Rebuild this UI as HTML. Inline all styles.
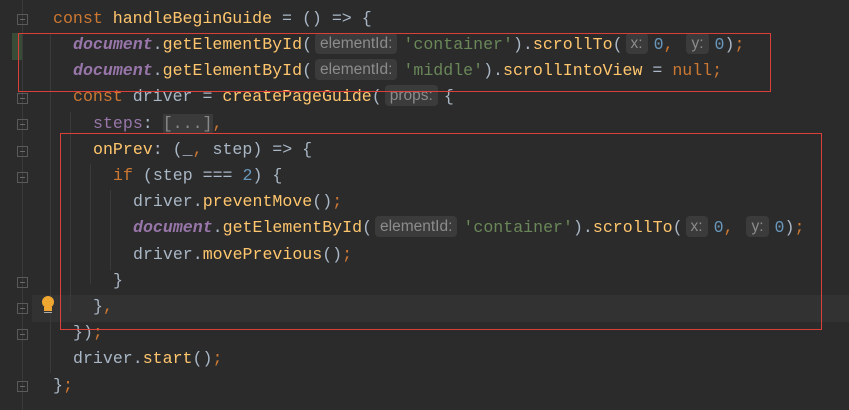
<!DOCTYPE html>
<html><head><meta charset="utf-8"><style>
html,body{margin:0;padding:0;background:#2b2b2b;width:849px;height:410px;overflow:hidden;position:relative}
.l{position:absolute;left:0;height:26px;line-height:26px;font-family:"Liberation Mono",monospace;font-size:16.6px;color:#a9b7c6;white-space:pre}
.k{color:#cc7832}.f{color:#ffc66d}.d{color:#9876aa;font-style:italic;font-weight:bold}.p{color:#9876aa}
.s{color:#6a8759}.n{color:#6897bb}
.h{display:inline-block;background:#3b3b3b;color:#8c8c8c;font-family:"Liberation Sans",sans-serif;font-size:15.5px;line-height:21px;padding:0 5px;border-radius:4px;margin:0 6px 0 3px;vertical-align:1px}
.fold{position:absolute;left:17px;width:11px;height:11px;border:1px solid #5a5a5a;box-sizing:border-box}
.fold:after{content:"";position:absolute;left:2px;top:4px;width:5px;height:1px;background:#6a6a6a}
.g{position:absolute;width:1px;background:#3a3a3a}
.box{position:absolute;border:1px solid #d9403a}
</style></head><body>
<div style="position:absolute;left:32px;top:295px;width:817px;height:27px;background:#323232"></div>
<div style="position:absolute;left:22px;top:0;width:1px;height:410px;background:#3a3a3a"></div>
<div style="position:absolute;left:12px;top:33px;width:10px;height:27px;background:#384c38"></div>
<div class="g" style="left:50px;top:33px;height:340px"></div>
<div class="g" style="left:70px;top:112px;height:200px"></div>
<div class="g" style="left:90px;top:164px;height:120px"></div>
<div class="g" style="left:110px;top:190px;height:80px"></div>
<div class="fold" style="top:14px"></div>
<div class="fold" style="top:93px"></div>
<div class="fold" style="top:119px"></div>
<div class="fold" style="top:146px"></div>
<div class="fold" style="top:172px"></div>
<div class="fold" style="top:277px"></div>
<div class="fold" style="top:303px"></div>
<div class="fold" style="top:329px"></div>
<div class="fold" style="top:381px"></div>
<div style="position:absolute;left:42px;top:296px;width:12px;height:12px;border-radius:50%;background:#f0a732"></div>
<div style="position:absolute;left:44px;top:307px;width:8px;height:4px;background:#f0a732"></div>
<div style="position:absolute;left:44px;top:312px;width:8px;height:1px;background:#aaa"></div>

<div class="l" style="top:6px;left:53px"><span class="k">const </span><span class="f">handleBeginGuide</span> = () =&gt; {</div>
<div class="l" style="top:32px;left:73px"><span class="d">document</span>.<span class="f">getElementById</span>(<span class="h">elementId:</span><span class="s">'container'</span>).<span class="f">scrollTo</span>(<span class="h">x:</span><span class="n">0</span><span class="k">, </span><span class="h">y:</span><span class="n">0</span>)<span class="k">;</span></div>
<div class="l" style="top:58px;left:73px"><span class="d">document</span>.<span class="f">getElementById</span>(<span class="h">elementId:</span><span class="s">'middle'</span>).<span class="f">scrollIntoView</span> = <span class="k">null;</span></div>
<div class="l" style="top:84px;left:73px"><span class="k">const </span>driver = <span class="f">createPageGuide</span>(<span class="h">props:</span>{</div>
<div class="l" style="top:111px;left:93px"><span class="p">steps</span>: <span style="background:#3a3a3a;color:#888">[...]</span><span class="k">,</span></div>
<div class="l" style="top:137px;left:93px"><span class="f">onPrev</span>: (_<span class="k">, </span>step) =&gt; {</div>
<div class="l" style="top:163px;left:113px"><span class="k">if </span>(step === <span class="n">2</span>) {</div>
<div class="l" style="top:189px;left:133px">driver.<span class="f">preventMove</span>()<span class="k">;</span></div>
<div class="l" style="top:215px;left:133px"><span class="d">document</span>.<span class="f">getElementById</span>(<span class="h">elementId:</span><span class="s">'container'</span>).<span class="f">scrollTo</span>(<span class="h">x:</span><span class="n">0</span><span class="k">, </span><span class="h">y:</span><span class="n">0</span>)<span class="k">;</span></div>
<div class="l" style="top:242px;left:133px">driver.<span class="f">movePrevious</span>()<span class="k">;</span></div>
<div class="l" style="top:268px;left:113px">}</div>
<div class="l" style="top:294px;left:93px">}<span class="k">,</span></div>
<div class="l" style="top:320px;left:73px">})<span class="k">;</span></div>
<div class="l" style="top:346px;left:73px">driver.<span class="f">start</span>()<span class="k">;</span></div>
<div class="l" style="top:373px;left:53px">}<span class="k">;</span></div>

<div class="box" style="left:18px;top:33px;width:751px;height:57px"></div>
<div class="box" style="left:60px;top:133px;width:760px;height:195px"></div>
</body></html>
